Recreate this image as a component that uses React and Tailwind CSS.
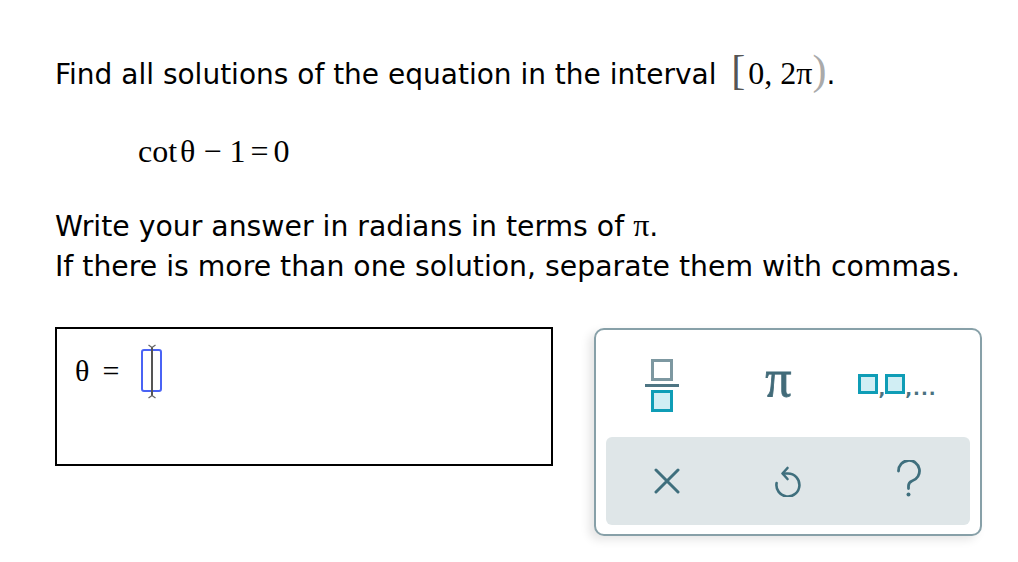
import React from "react";

const sans = { fontFamily: '"DejaVu Sans", Verdana, sans-serif' };
const serif = { fontFamily: '"Liberation Serif", "Times New Roman", serif' };

function XIcon() {
  return (
    <svg width="26" height="26" viewBox="0 0 26 26" fill="none">
      <path d="M2 2 L24 24 M24 2 L2 24" stroke="#3f6f7d" strokeWidth="3" strokeLinecap="round" />
    </svg>
  );
}

function UndoIcon() {
  return (
    <svg width="30" height="32" viewBox="0 0 30 32" fill="none">
      <path d="M10 8.5 H15 A11.5 11.5 0 1 1 3.6 18" stroke="#3f6f7d" strokeWidth="2.6" strokeLinecap="round" />
      <path d="M14.5 3 L9.5 8.5 L14.5 14" stroke="#3f6f7d" strokeWidth="2.6" strokeLinecap="round" strokeLinejoin="round" />
    </svg>
  );
}

function HelpIcon() {
  return (
    <svg width="26" height="38" viewBox="0 0 26 38" fill="none">
      <path d="M2.5 11 A10.5 10.5 0 1 1 16 21 Q12.5 22.5 12.5 26 V28.5" stroke="#3f6f7d" strokeWidth="2.8" strokeLinecap="round" />
      <circle cx="12.5" cy="34.5" r="2" fill="#3f6f7d" />
    </svg>
  );
}

function IBeam() {
  return (
    <svg className="absolute left-1/2 -translate-x-1/2 -top-[7px]" width="10" height="55" viewBox="0 0 10 55" fill="none">
      <path d="M5 3 V52" stroke="#555" strokeWidth="2" />
      <path d="M1.5 1 L5 3.5 L8.5 1 M1.5 54 L5 51.5 L8.5 54" stroke="#666" strokeWidth="1.3" />
    </svg>
  );
}

export default function App() {
  return (
    <div className="w-[1018px] h-[562px] bg-white text-black overflow-hidden" style={sans}>
      <div className="pl-[55px] pt-[48px]">
        {/* Line 1 */}
        <div className="flex items-baseline h-[44px] leading-[44px] text-[28px] whitespace-pre">
          <span>Find all solutions of the equation in the interval </span>
          <span className="flex items-baseline ml-[6px]" style={serif}>
            <span className="text-[42px] text-[#555]">[</span>
            <span className="text-[32px] ml-[3px]">0, 2π</span>
            <span className="text-[42px] text-[#aaa]">)</span>
          </span>
          <span>.</span>
        </div>

        {/* Equation */}
        <div className="mt-[39px] ml-[83px] h-[40px] leading-[40px] text-[32px] flex items-baseline" style={serif}>
          <span>cot</span>
          <span className="ml-[3px]">θ</span>
          <span className="ml-[8px]">−</span>
          <span className="ml-[8px]">1</span>
          <span className="ml-[5px]">=</span>
          <span className="ml-[5px]">0</span>
        </div>

        {/* Instructions */}
        <div className="mt-[36px] text-[28.3px] leading-[40px]">
          <div>
            Write your answer in radians in terms of <span style={serif} className="text-[32px] leading-none">π</span>.
          </div>
          <div>If there is more than one solution, separate them with commas.</div>
        </div>

        {/* Answer row */}
        <div className="mt-[40px] flex items-start">
          <div className="w-[498px] h-[139px] border-2 border-black">
            <div className="flex items-center h-[43px] mt-[20px] ml-[18px]" style={serif}>
              <span className="text-[30px] leading-none">θ</span>
              <span className="text-[30px] leading-none ml-[13px]">=</span>
              <div className="relative ml-[22px] w-[21px] h-[43px] border-2 border-[#4a63f5] rounded-[3px]">
                <IBeam />
              </div>
            </div>
          </div>

          <div className="ml-[41px] mt-[1px] w-[388px] h-[208px] border-2 border-[#87a0a8] rounded-[10px] bg-white shadow-[-5px_4px_10px_rgba(0,0,0,0.10)] flex flex-col">
            <div className="h-[107px] pl-[7px] grid grid-cols-[117px_117px_117px] items-center">
              <div className="flex flex-col items-center pt-[3px]">
                <div className="w-[22px] h-[22px] border-[3px] border-[#7d98a1] bg-white" />
                <div className="w-[34px] h-[3px] bg-[#4e7583] my-[3px]" />
                <div className="w-[22px] h-[22px] border-[3px] border-[#0f9db6] bg-[#d1eef4]" />
              </div>
              <div className="flex justify-center items-center">
                <span className="text-[52px] leading-none text-[#426b79] -mt-[10px] [-webkit-text-stroke:0.8px_#426b79]" style={serif}>π</span>
              </div>
              <div className="flex justify-center items-end pl-[4px]">
                <div className="w-[20px] h-[20px] border-[3px] border-[#0f9db6] bg-[#d1eef4]" />
                <span className="text-[18px] leading-none text-[#4a7280] font-bold mb-[-4px]">,</span>
                <div className="w-[20px] h-[20px] border-[3px] border-[#0f9db6] bg-[#d1eef4]" />
                <span className="text-[18px] leading-none text-[#4a7280] font-bold mb-[-4px] tracking-[1px]">,...</span>
              </div>
            </div>
            <div className="mx-[10px] h-[88px] rounded-[6px] bg-[#dfe6e8] grid grid-cols-3 items-center">
              <div className="flex justify-center"><XIcon /></div>
              <div className="flex justify-center"><UndoIcon /></div>
              <div className="flex justify-center -mt-[4px]"><HelpIcon /></div>
            </div>
          </div>
        </div>
      </div>
    </div>
  );
}
